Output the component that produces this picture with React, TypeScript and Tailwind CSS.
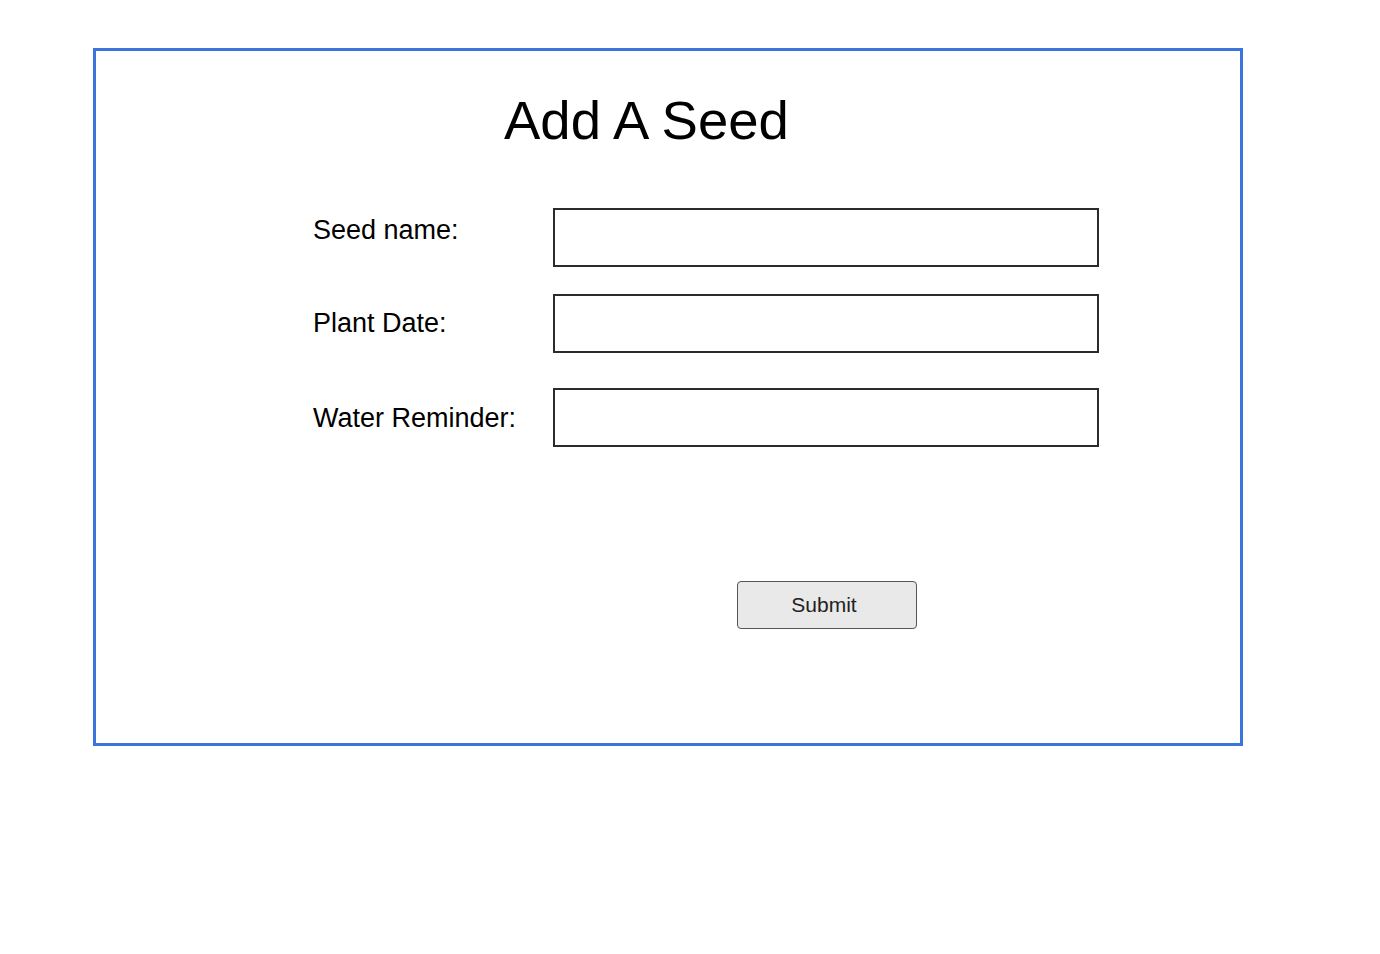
const fields = [
  { label: "Seed name:", rowGap: "mt-[59px]", labelTop: "mt-[9px]" },
  { label: "Plant Date:", rowGap: "mt-[27px]", labelTop: "mt-[16px]" },
  { label: "Water Reminder:", rowGap: "mt-[35px]", labelTop: "mt-[17px]" },
];

export default function App() {
  return (
    <div
      className="min-h-screen bg-white pt-[48px] pl-[93px] text-black"
      style={{ fontFamily: '"Liberation Sans", Arial, sans-serif' }}
    >
      <div className="w-[1150px] h-[698px] border-[3px] border-[#3a74dc]">
        <h1 className="mt-[43px] pl-[408px] text-[54.5px] leading-none font-normal">
          Add A Seed
        </h1>

        <form className="pl-[217px]" onSubmit={(e) => e.preventDefault()}>
          {fields.map((f) => (
            <div key={f.label} className={`flex items-start ${f.rowGap}`}>
              <label className={`w-[240px] text-[27px] leading-none ${f.labelTop}`}>
                {f.label}
              </label>
              <input
                type="text"
                className="w-[546px] h-[59px] border-2 border-[#2b2b2b] bg-white px-2 outline-none"
              />
            </div>
          ))}

          <div className="mt-[134px] pl-[424px]">
            <button
              type="submit"
              className="w-[180px] h-[48px] rounded-[4px] border border-[#555] bg-[#e9e9e9] pr-[6px] text-[21px] leading-none text-[#222]"
            >
              Submit
            </button>
          </div>
        </form>
      </div>
    </div>
  );
}
